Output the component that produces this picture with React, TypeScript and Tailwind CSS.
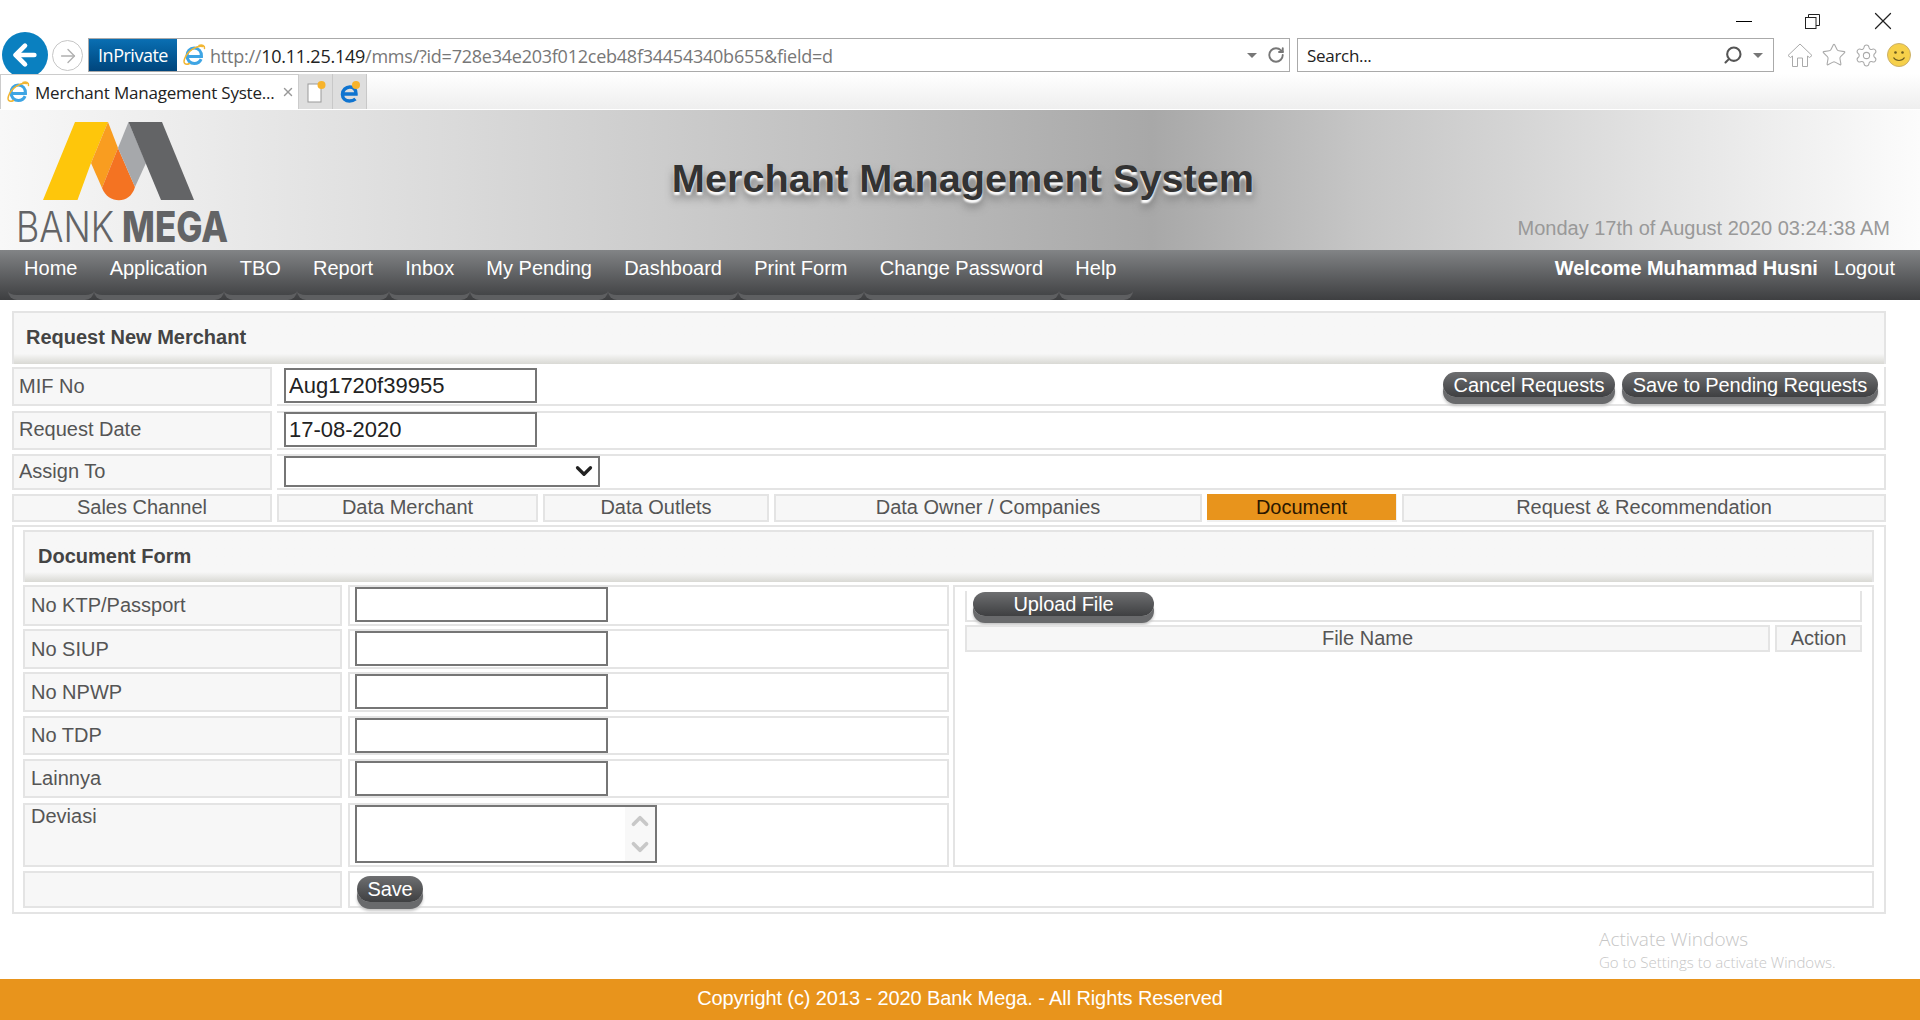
import { ArrowLeft, ArrowRight, ChevronDown, ChevronUp, RotateCw, Search, Settings, Star, X } from "lucide-react"

const navItems = ["Home", "Application", "TBO", "Report", "Inbox", "My Pending", "Dashboard", "Print Form", "Change Password", "Help"]

const cell = "border-2 border-[#e4e4e4] bg-[#f7f7f7] text-[#555]"

function IeIcon({ className }: { className: string }) {
  return (
    <svg viewBox="0 0 24 24" className={className} fill="none">
      <path d="M5 13.500h14.500c.4-5-3-8.500-7.300-8.500C7.800 5 5 8.500 5 12.800c0 4.500 3.200 7.700 7.300 7.700 3.200 0 5.700-1.700 6.800-4.300" stroke="#3ea5e4" strokeWidth="3" />
      <path d="M20.500 3.500C15 2 5.500 8 2.500 16c-1.500 4.500 1 6.500 5 4.500M17 2.500c3-1 6 0 5.500 3" stroke="#f2b632" strokeWidth="1.500" strokeLinecap="round" />
    </svg>
  )
}

function PillButton({ label, className }: { label: string; className: string }) {
  return (
    <button
      className={`flex items-center justify-center rounded-[13px] bg-gradient-to-b from-[#6e6f71] to-[#3f4042] text-[20px] leading-none tracking-[-0.1px] text-white shadow-[0_7px_0_#696a6c,0_9px_3px_#c4c4c4] ${className}`}
    >
      {label}
    </button>
  )
}

function TitleBar({ title, className }: { title: string; className: string }) {
  return (
    <div
      className={`flex items-center border-2 border-[#e4e4e4] border-b-0 bg-gradient-to-b from-[#f7f7f7] from-80% to-[#d9d9d4] text-[20px] font-bold text-[#444] ${className}`}
    >
      {title}
    </div>
  )
}

function FieldRow({ label, height, gap, leading = "leading-[37px]", children }: { label: string; height: string; gap: string; leading?: string; children?: React.ReactNode }) {
  return (
    <div className={`grid grid-cols-[319px_601px] gap-x-[6px] ${height} ${gap}`}>
      <div className={`${cell} pl-[6px] text-[20px] ${leading}`}>{label}</div>
      <div className="flex border-2 border-[#e4e4e4] pl-[5px]">{children}</div>
    </div>
  )
}

function TextBox({ value }: { value?: string }) {
  return (
    <input
      readOnly
      defaultValue={value}
      className="h-[35px] w-[253px] border-2 border-[#767676] bg-white pl-[3px] text-[22px] text-[#222] outline-none"
    />
  )
}

export default function App() {
  return (
    <div className="relative flex h-[1020px] w-full flex-col overflow-hidden bg-white font-['Liberation_Sans',Arial,sans-serif]">
      {/* window controls */}
      <div className="flex h-[38px] shrink-0 items-center justify-end pr-[22px] pt-[4px] text-black">
        <div className="mr-[53px] h-[1px] w-[16px] bg-black" />
        <svg viewBox="0 0 15 15" className="mr-[48px] h-[15px] w-[15px]" fill="none" stroke="#222" strokeWidth="1">
          <rect x="0.500" y="3.500" width="10.500" height="11" fill="white" />
          <path d="M3.500 3.500V.5h11v11H11" />
        </svg>
        <X className="h-[30px] w-[30px]" strokeWidth={1} absoluteStrokeWidth color="#222" />
      </div>

      {/* address row */}
      <div className="flex h-[36px] shrink-0 pl-[2px] font-['Open_Sans',sans-serif]">
        <div className="-mt-[6px] flex h-[46px] w-[46px] shrink-0 items-center justify-center rounded-full bg-[#0a80c0]">
          <ArrowLeft className="h-[32px] w-[32px]" strokeWidth={3.500} color="white" />
        </div>
        <div className="ml-[4px] mt-[2px] flex h-[31px] w-[31px] shrink-0 items-center justify-center rounded-full border border-[#c6c6c6]">
          <ArrowRight className="h-[22px] w-[22px]" strokeWidth={1.500} color="#b0b0b0" />
        </div>
        <div className="ml-[5px] flex h-[34px] w-[1202px] items-center border border-[#aaa] pr-[4px]">
          <div className="flex h-full w-[88px] shrink-0 items-center justify-center bg-gradient-to-b from-[#0a6fb3] to-[#00457c] pt-[1px] text-[18px] tracking-[-0.500px] text-white">
            InPrivate
          </div>
          <IeIcon className="ml-[5px] h-[24px] w-[24px]" />
          <span className="ml-[4px] pt-[2px] text-[18px] tracking-[-0.240px] text-[#777]">
            http://<span className="text-[#222]">10.11.25.149</span>/mms/?id=728e34e203f012ceb48f34454340b655&field=d
          </span>
          <div className="ml-auto mr-[10px] h-0 w-0 border-x-[5px] border-t-[5px] border-x-transparent border-t-[#777]" />
          <RotateCw className="h-[18px] w-[18px]" strokeWidth={2.500} color="#777" />
        </div>
        <div className="ml-[7px] flex h-[34px] w-[477px] items-center border border-[#aaa] pl-[9px] pr-[10px] text-[17px] tracking-[-0.300px] text-[#222]">
          <span className="pt-[2px]">Search...</span>
          <Search className="ml-auto mr-[10px] h-[20px] w-[20px] -scale-x-100" strokeWidth={2.500} color="#555" />
          <div className="h-0 w-0 border-x-[5px] border-t-[5px] border-x-transparent border-t-[#777]" />
        </div>
        <div className="ml-[13px] flex h-[34px] items-center">
          <svg viewBox="0 0 26 24" className="h-[24px] w-[26px]" fill="none" stroke="#aaa" strokeWidth="1">
            <path d="M1 12.500 13 1l12 11.500-2.500 2L20.500 13v10.500h-5V15h-5v8.500h-5V13l-2 1.500z" />
          </svg>
          <Star className="ml-[8px] h-[26px] w-[26px]" strokeWidth={1} color="#aaa" />
          <Settings className="ml-[7px] h-[25px] w-[25px]" strokeWidth={1} color="#aaa" />
          <div className="relative ml-[8px] h-[24px] w-[24px] shrink-0">
            <svg viewBox="0 0 24 24" className="h-[24px] w-[24px]">
              <circle cx="12" cy="12" r="11.500" fill="#f6d04a" stroke="#cbb06a" />
              <circle cx="8.500" cy="9.500" r="1.300" fill="#6b5a1e" />
              <circle cx="15.500" cy="9.500" r="1.300" fill="#6b5a1e" />
              <path d="M6.500 14.500c2.500 4 8.500 4 11 0" fill="none" stroke="#6b5a1e" strokeWidth="1.200" />
            </svg>
          </div>
        </div>
      </div>

      {/* tab row */}
      <div className="flex h-[36px] shrink-0 border-b border-white bg-gradient-to-b from-white to-[#eeeeee] font-['Open_Sans',sans-serif]">
        <div className="flex w-[299px] items-center border border-b-0 border-[#ccc] bg-white pl-[5px] text-[17px] tracking-[-0.200px] text-[#222]">
          <IeIcon className="mr-[5px] h-[24px] w-[24px] shrink-0" />
          <span className="whitespace-nowrap pt-[2px]">Merchant Management Syste...</span>
          <X className="ml-auto mr-[3px] h-[14px] w-[14px]" strokeWidth={2.500} color="#999" />
        </div>
        <div className="flex w-[34px] items-center justify-center border-r border-[#c8c8c8] bg-[#dedede]">
          <svg viewBox="0 0 20 24" className="h-[24px] w-[20px]">
            <rect x="2" y="4" width="13" height="18" fill="white" stroke="#999" />
            <circle cx="15.500" cy="5" r="4" fill="#f7b32b" />
          </svg>
        </div>
        <div className="flex w-[34px] items-center justify-center border-r border-[#c8c8c8] bg-[#dedede]">
          <svg viewBox="0 0 24 24" className="h-[24px] w-[24px]" fill="none">
            <path d="M5 14h13c.3-4.500-2.500-7-6.200-7C8 7 4.500 10 4.500 14.500c0 4 3 6.500 7 6.500 2.500 0 4.500-.8 6-2" stroke="#0f74d0" strokeWidth="3.500" />
            <circle cx="18" cy="5" r="4" fill="#f7b32b" />
          </svg>
        </div>
      </div>

      {/* app header */}
      <div className="relative flex h-[140px] shrink-0 items-center justify-center bg-[linear-gradient(to_right,#f8f8f8,#d2d2d2_30%,#c0c0c0_44%,#a8a8a8_60%,#c6c6c6_71%,#e6e6e6_88%,#fcfcfc)]">
        <svg viewBox="0 0 280 150" className="absolute left-0 top-0 z-10 h-[150px] w-[280px]">
          <polygon points="43,90 75,12 108,12 91,53 77.500,90" fill="#fec60b" />
          <polygon points="108,12 118,38 102,78 91,53" fill="#f99d20" />
          <path d="M118 38 135 77C130 95 108 94 102 78Z" fill="#f47322" />
          <polygon points="128.500,12 146,53 135,77 118,38" fill="#a6a8ab" />
          <polygon points="128.500,12 162,12 194,90 161,90" fill="#636466" />
          <text x="16" y="132" fontFamily="Inter, sans-serif" fontWeight="300" fontSize="42" textLength="98" lengthAdjust="spacingAndGlyphs" fill="#636466">BANK</text>
          <text x="122" y="132" fontFamily="Inter, sans-serif" fontWeight="800" fontSize="42" textLength="106" lengthAdjust="spacingAndGlyphs" fill="#636466">MEGA</text>
        </svg>
        <h1 className="mb-[2px] ml-[6px] text-[39.7px] font-bold text-[#333] [text-shadow:0_3px_2px_#fff,0_7px_8px_#777]">Merchant Management System</h1>
        <div className="absolute bottom-[7px] right-[30px] text-[20px] text-[#999]">Monday 17th of August 2020 03:24:38 AM</div>
      </div>

      {/* nav */}
      <div className="flex h-[50px] shrink-0 bg-gradient-to-b from-[#828486] to-[#3e3f41] pl-[8px] text-[20px] text-white">
        {navItems.map((item) => (
          <div key={item} className="flex h-[50px] items-start rounded-b-[9px] border-b-[5px] border-[#5e5f61] px-[16.1px] pt-[3px]">
            {item}
          </div>
        ))}
        <div className="ml-auto pr-[25px] pt-[3px]">
          <b className="tracking-[-0.1px]">Welcome Muhammad Husni</b>
          <span className="ml-[16px]">Logout</span>
        </div>
      </div>

      {/* page content */}
      <div className="ml-[12px] mt-[11px] w-[1874px]">
        <TitleBar title="Request New Merchant" className="h-[53px] pb-[3px] pl-[12px]" />

        <div className="mt-[3px] grid grid-cols-[260px_1609px] gap-x-[5px]">
          <div className={`${cell} h-[39px] pl-[5px] text-[20px] leading-[35px]`}>MIF No</div>
          <div className="flex h-[39px] items-start border-2 border-l-0 border-[#e4e4e4] border-t-0 pl-[7px] pt-[1px]">
            <TextBox value="Aug1720f39955" />
            <PillButton label="Cancel Requests" className="ml-auto mr-[7px] mt-[4px] h-[25px] w-[172px]" />
            <PillButton label="Save to Pending Requests" className="mr-[6px] mt-[4px] h-[25px] w-[256px]" />
          </div>
        </div>
        <div className="mt-[5px] grid grid-cols-[260px_1609px] gap-x-[5px]">
          <div className={`${cell} h-[39px] pl-[5px] text-[20px] leading-[33px]`}>Request Date</div>
          <div className="h-[39px] border-2 border-l-0 border-[#e4e4e4] pl-[7px]">
            <div className="-mt-[1px]">
              <TextBox value="17-08-2020" />
            </div>
          </div>
        </div>
        <div className="mt-[4px] grid grid-cols-[260px_1609px] gap-x-[5px]">
          <div className={`${cell} h-[36px] pl-[5px] text-[20px] leading-[31px]`}>Assign To</div>
          <div className="h-[36px] border-2 border-l-0 border-[#e4e4e4] pl-[7px]">
            <div className="relative w-[316px]">
              <select className="h-[31px] w-[316px] appearance-none border-2 border-[#767676] bg-white" />
              <ChevronDown className="absolute right-[3px] top-[2px] h-[26px] w-[26px]" strokeWidth={3} color="#222" />
            </div>
          </div>
        </div>

        {/* tabs */}
        <div className="mt-[4px] grid h-[28px] grid-cols-[260px_261px_226px_428px_190px_484px] gap-x-[5px] text-center text-[20px] leading-[22px] text-[#555]">
          <div className={cell}>Sales Channel</div>
          <div className={cell}>Data Merchant</div>
          <div className={cell}>Data Outlets</div>
          <div className={cell}>Data Owner / Companies</div>
          <div className="border-b-2 border-r border-[#f0f0f0] bg-[#e8941c] pt-[2px] text-[#2b1700]">Document</div>
          <div className={cell}>Request &amp; Recommendation</div>
        </div>

        {/* document form */}
        <div className="mt-[3px] h-[389px] border-2 border-[#e4e4e4] pl-[9px] pr-[10px] pt-[3px]">
          <TitleBar title="Document Form" className="h-[52px] pb-[2px] pl-[13px]" />
          <div className="mt-[3px] flex">
            <div>
              <FieldRow label="No KTP/Passport" height="h-[41px]" gap="">
                <TextBox />
              </FieldRow>
              <FieldRow label="No SIUP" height="h-[40px]" gap="mt-[3px]" leading="leading-[36px]">
                <TextBox />
              </FieldRow>
              <FieldRow label="No NPWP" height="h-[39px]" gap="mt-[3px]" leading="leading-[36px]">
                <TextBox />
              </FieldRow>
              <FieldRow label="No TDP" height="h-[39px]" gap="mt-[5px]" leading="leading-[34px]">
                <TextBox />
              </FieldRow>
              <FieldRow label="Lainnya" height="h-[39px]" gap="mt-[4px]" leading="leading-[34px]">
                <TextBox />
              </FieldRow>
              <FieldRow label="Deviasi" height="h-[64px]" gap="mt-[5px]" leading="leading-[22px]">
                <div className="flex h-[58px] w-[302px] border-2 border-[#767676]">
                  <div className="flex-1" />
                  <div className="flex w-[30px] flex-col items-center justify-between bg-[#f8f8f8] py-[1px]">
                    <ChevronUp className="h-[28px] w-[28px]" strokeWidth={3.500} color="#c8c8c8" />
                    <ChevronDown className="h-[28px] w-[28px]" strokeWidth={3.500} color="#c8c8c8" />
                  </div>
                </div>
              </FieldRow>
            </div>
            <div className="ml-[4px] h-[282px] w-[921px] border-2 border-[#e4e4e4] px-[10px] pt-[4px]">
              <div className="flex h-[31px] border-2 border-t-0 border-[#e4e4e4] pl-[6px] pt-[1px]">
                <PillButton label="Upload File" className="h-[24px] w-[181px]" />
              </div>
              <div className="mt-[3px] grid h-[27px] grid-cols-[805px_87px] gap-x-[5px] text-center text-[20px] leading-[23px]">
                <div className={cell}>File Name</div>
                <div className={cell}>Action</div>
              </div>
            </div>
          </div>
          <div className="mt-[4px] grid h-[37px] grid-cols-[319px_1526px] gap-x-[6px]">
            <div className={cell} />
            <div className="border-2 border-[#e4e4e4] pl-[7px] pt-[3px]">
              <PillButton label="Save" className="h-[26px] w-[66px]" />
            </div>
          </div>
        </div>
      </div>

      {/* windows watermark */}
      <div className="absolute left-[1599px] top-[926px] font-['Open_Sans',sans-serif] font-light text-[#c6c6c6]">
        <div className="text-[19px] leading-[26px]">Activate Windows</div>
        <div className="text-[15px] leading-[20px]">Go to Settings to activate Windows.</div>
      </div>

      {/* footer */}
      <div className="mt-auto flex h-[41px] shrink-0 items-center justify-center bg-[#e8941c] pb-[3px] text-[20px] tracking-[-0.1px] text-white">
        Copyright (c) 2013 - 2020 Bank Mega. - All Rights Reserved
      </div>
    </div>
  )
}
